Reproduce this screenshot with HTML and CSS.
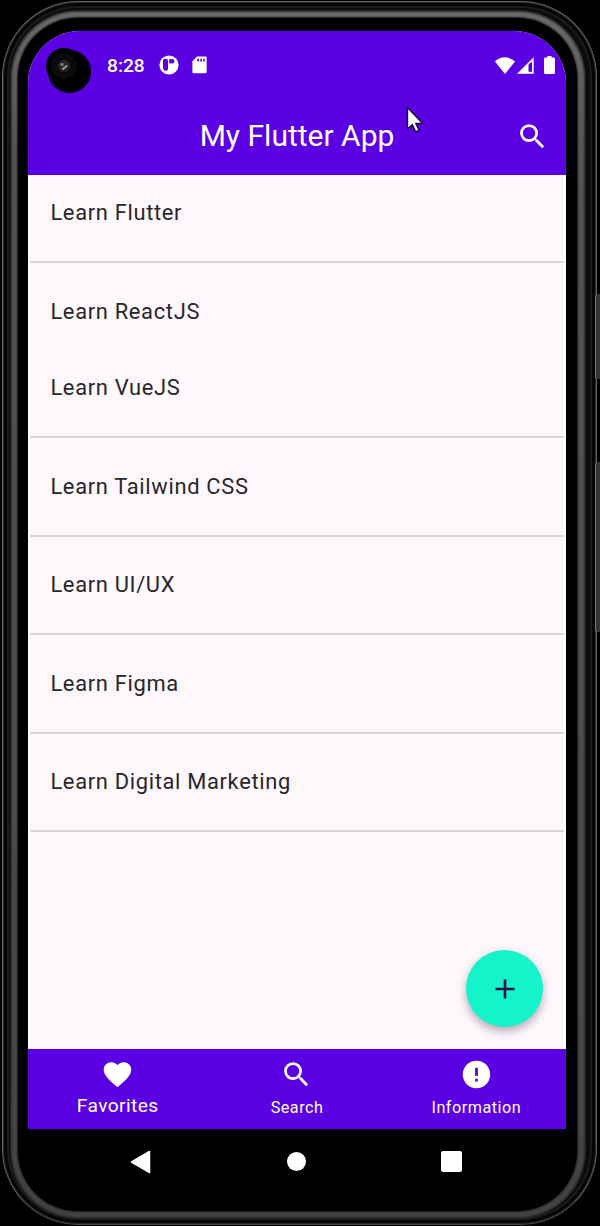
FILE: index.html
```html
<!DOCTYPE html>
<html lang="en">
<head>
<meta charset="utf-8">
<title>My Flutter App</title>
<link rel="stylesheet" href="styles.css">
</head>
<body>
<div class="device">
  <i class="side-button power"></i>
  <i class="side-button volume"></i>
  <div class="edge"><div class="rim"><div class="glass">
    <div class="screen">
      <header class="top">
        <div class="status">
          <span class="clock">8:28</span>
          <svg class="app-icon" width="20" height="20" viewBox="0 0 20 20"><circle cx="10" cy="10" r="9.6" fill="#fff"/><path d="M4 5.500Q4 4 5.500 4H7.500Q9 4 9 5.500V14Q9 15.800 7.200 15.800Q4 15.300 4 12.500Z" fill="#5b00e3"/><path d="M10.300 4H12V8.500H10.300Z" fill="#5b00e3"/><circle cx="13.200" cy="6.300" r="2.200" fill="#5b00e3"/></svg>
          <svg class="sd" width="15" height="18" viewBox="0 0 15 18"><path d="M5 .5H13.500Q14.700.5 14.700 1.700V16Q14.700 17.300 13.500 17.300H1.700Q.4 17.300.4 16V5.200Z" fill="#fff"/><path d="M5.300 2.800h1.700v2.700H5.300zM8.300 2.800H10v2.700H8.300zM11.200 2.800h1.600v2.700h-1.600z" fill="#5b00e3"/></svg>
          <span class="signals">
            <svg width="20" height="17" viewBox="0 0 20 17"><path d="M10 17L0 4.500Q4.500.3 10 .3T20 4.500Z" fill="#fff"/></svg>
            <svg width="17" height="17" viewBox="0 0 17 17"><path fill="#fff" fill-rule="evenodd" d="M16.700.3V16.800H0ZM11.500 7.400V14.800H15V4.500Z"/><path d="M12.700 6h1v8.800h-1z" fill="#5b00e3"/></svg>
            <svg class="battery" width="11" height="18" viewBox="0 0 11 18"><path d="M3.500 0h4v1.600h2Q11 1.600 11 3v13.500Q11 18 9.500 18h-8Q0 18 0 16.500V3Q0 1.600 1.500 1.600h2Z" fill="#fff"/></svg>
          </span>
        </div>
        <div class="appbar">
          <h1>My Flutter App</h1>
          <svg class="find" viewBox="0 0 24 24"><path d="M15.500 14h-.79l-.28-.27A6.471 6.471 0 0 0 16 9.500 6.500 6.500 0 1 0 9.500 16c1.610 0 3.090-.59 4.230-1.570l.27.28v.79l5 4.990L20.490 19l-4.990-5zm-6 0C7.010 14 5 11.990 5 9.500S7.010 5 9.500 5 14 7.010 14 9.500 11.990 14 9.500 14z"/></svg>
        </div>
        <svg class="camera" width="48" height="49" viewBox="0 0 48 49"><circle cx="24.500" cy="25.500" r="21.500"/><circle cx="19" cy="20" r="18"/><circle cx="19" cy="20" r="13" fill="#0b0a0d"/><circle cx="19" cy="20" r="6" fill="#25242a"/><circle cx="17" cy="18.500" r="1.800" fill="#777"/><path d="M18 23L21.500 20" stroke="#999" stroke-width="2" stroke-linecap="round"/></svg>
        <svg class="pointer" width="20" height="28" viewBox="0 0 20 28"><path d="M1.500 1.500V23L6.300 18.600L9.700 25.800L13 24.300L9.800 17.300H16.500Z" fill="#fff" stroke="#100030" stroke-width="1.300"/></svg>
      </header>
      <main class="list">
        <p class="tile divided">Learn Flutter</p>
        <p class="tile">Learn ReactJS</p>
        <p class="tile divided">Learn VueJS</p>
        <p class="tile divided">Learn Tailwind CSS</p>
        <p class="tile divided">Learn UI/UX</p>
        <p class="tile divided">Learn Figma</p>
        <p class="tile divided">Learn Digital Marketing</p>
        <button class="fab" aria-label="Add"><svg width="20" height="20" viewBox="0 0 20 20"><path d="M10 .5v19M.5 10h19" stroke="#20124d" stroke-width="2.600"/></svg></button>
      </main>
      <nav class="tabs">
        <div class="tab selected"><svg viewBox="0 0 24 24"><path d="M12 21.350l-1.450-1.320C5.400 15.360 2 12.280 2 8.500 2 5.420 4.420 3 7.500 3c1.740 0 3.410.81 4.500 2.090C13.090 3.810 14.760 3 16.500 3 19.580 3 22 5.420 22 8.500c0 3.780-3.400 6.860-8.550 11.540L12 21.350z"/></svg><span>Favorites</span></div>
        <div class="tab"><svg viewBox="0 0 24 24"><path d="M15.500 14h-.79l-.28-.27A6.471 6.471 0 0 0 16 9.500 6.500 6.500 0 1 0 9.500 16c1.610 0 3.090-.59 4.230-1.570l.27.28v.79l5 4.990L20.490 19l-4.990-5zm-6 0C7.010 14 5 11.990 5 9.500S7.010 5 9.500 5 14 7.010 14 9.500 11.990 14 9.500 14z"/></svg><span>Search</span></div>
        <div class="tab"><svg viewBox="0 0 24 24"><path d="M12 2C6.480 2 2 6.480 2 12s4.480 10 10 10 10-4.480 10-10S17.520 2 12 2zm1 15h-2v-2h2v2zm0-4h-2V7h2v6z"/></svg><span>Information</span></div>
      </nav>
    </div>
    <div class="system-nav">
      <svg width="22" height="24" viewBox="0 0 22 24"><path d="M19.500 1.500V22.500L1.500 12Z" fill="#fff" stroke="#fff" stroke-width="1.500" stroke-linejoin="round"/></svg>
      <i class="home"></i>
      <i class="recent"></i>
    </div>
  </div></div></div>
</div>
</body>
</html>
```
FILE: styles.css
```css
* { box-sizing: border-box; }
body { margin: 0; background: #000; font-family: Roboto, sans-serif; overflow: hidden; }
.device { position: relative; width: 600px; height: 1226px; padding: 1px 3px 1px 2px; }
.edge {
  height: 1224px; padding: 9px 11px 6px 8px;
  border: 1px solid #646464; border-bottom-color: #444; border-radius: 76px;
  background: #0c0b0d;
  box-shadow: inset 0 0 0 1px #29282a, inset 0 0 0 4px #050505, inset 0 0 0 6px #1c1b1d;
}
.rim {
  height: 100%; padding: 7px 8px 7px 7px; border-radius: 67px;
  background: linear-gradient(#6c6a6c, #565456 12%, #4a494a 88%, #444244);
  box-shadow: 0 0 0 1px #222, inset 0 0 2px 1px #2b2a2c;
}
.glass {
  height: 100%; padding: 13px 11px 0 10px; border-radius: 60px;
  background: #000; box-shadow: 0 0 2px 1px #1c1b1d;
}
.side-button { position: absolute; right: 0; width: 5px; background: #343432; border-left: 1px solid #777; border-radius: 3px 0 0 3px; }
.power { top: 294px; height: 85px; }
.volume { top: 462px; height: 170px; }
.screen {
  height: 1098px; display: flex; flex-direction: column;
  border-radius: 52px 52px 0 0; background: #fef8fd;
}
.top { position: relative; height: 144px; background: #5b00e3; color: #fff; border-radius: 52px 52px 0 0; }
.status { height: 67px; display: flex; align-items: center; padding: 1px 11px 0 79px; }
.clock { width: 52px; font-size: 19.200px; font-weight: 500; }
.sd { margin-left: 13px; }
.signals { margin-left: auto; display: flex; align-items: center; gap: 2px; }
.battery { margin-left: 8px; }
.appbar { height: 77px; display: grid; grid-template-columns: 68px 1fr 68px; align-items: center; }
h1 { grid-column: 2; margin: 0; text-align: center; font-size: 30px; line-height: 40px; font-weight: 400; padding-bottom: 2px; }
.find { width: 33px; height: 33px; fill: #fff; justify-self: center; margin-bottom: 1px; }
.camera { position: absolute; left: 17px; top: 15px; }
.pointer { position: absolute; left: 378px; top: 75px; }
.list { position: relative; flex: 1; border: solid #fff; border-width: 0 2px; }
.tile {
  margin: 0; height: 76.700px; padding-left: 20.400px; line-height: 76.300px;
  font-size: 21.900px; letter-spacing: .67px; color: #29262b;
}
.divided { height: 98.500px; position: relative; }
.divided::after { content: ""; position: absolute; left: 0; right: 0; bottom: 10px; height: 2px; background: #ddd3da; }
.divided::after { bottom: 10.400px; }
.fab {
  position: absolute; right: 21px; bottom: 22px; width: 77px; height: 77px;
  display: grid; place-items: center; border: 0; padding: 0; border-radius: 50%;
  background: #14f3c9; box-shadow: 0 5px 8px rgba(40, 20, 45, .28), 0 1px 12px rgba(40, 20, 45, .08);
}
.tabs { height: 80px; display: grid; grid-template-columns: repeat(3, 1fr); background: #5b00e3; color: #fff; }
.tab { display: flex; flex-direction: column; align-items: center; padding-top: 9px; font-size: 16.200px; letter-spacing: .5px; }
.tab svg { width: 33px; height: 33px; fill: #fff; }
.tab span { line-height: 22px; margin-top: 6px; }
.selected span { font-size: 19.200px; margin-top: 4px; letter-spacing: .4px; }
.system-nav { height: 65px; display: flex; align-items: center; padding-left: 102px; }
.home { width: 19px; height: 19px; border-radius: 50%; background: #fff; margin-left: 135px; }
.recent { width: 21px; height: 21px; border-radius: 2px; background: #fff; margin-left: 135px; }
```
